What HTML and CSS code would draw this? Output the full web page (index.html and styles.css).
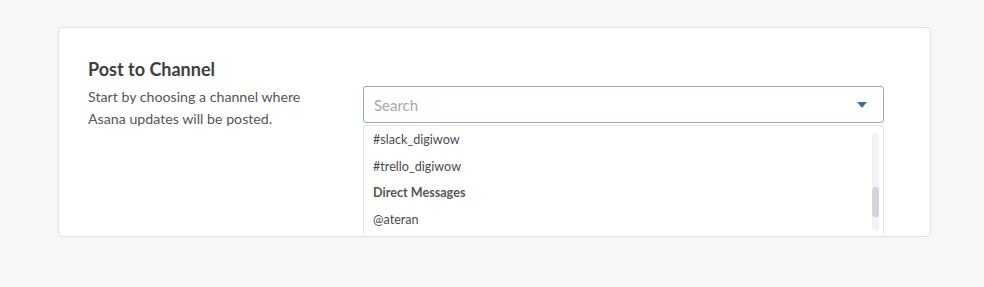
FILE: index.html
```html
<!DOCTYPE html>
<html lang="en">
<head>
    <meta charset="UTF-8">
    <meta name="viewport" content="width=device-width, initial-scale=1.0">
    <title>Post to Channel</title>
    <link rel="stylesheet" href="styles.css">
</head>
<body>
    <div class="card">
        <div class="intro">
            <h2>Post to Channel</h2>
            <p>Start by choosing a channel where Asana updates will be posted.</p>
        </div>
        <div class="picker">
            <div class="select">
                <span class="placeholder">Search</span>
                <svg class="caret" width="10" height="6" viewBox="0 0 10 6">
                    <path d="M0 0 L10 0 L5 6 Z" fill="#3b6ea5"/>
                </svg>
            </div>
            <div class="menu">
                <ul class="options">
                    <li>#slack_digiwow</li>
                    <li>#trello_digiwow</li>
                    <li class="group">Direct Messages</li>
                    <li>@ateran</li>
                </ul>
                <div class="scrollbar">
                    <div class="thumb"></div>
                </div>
            </div>
        </div>
    </div>
</body>
</html>
```

FILE: styles.css
```css
* {
    margin: 0;
    padding: 0;
    box-sizing: border-box;
    font-family: Lato, 'Open Sans', sans-serif;
}

body {
    background-color: #f7f7f7;
    padding: 27px 53px 0 58px;
}

.card {
    display: flex;
    height: 210px;
    background-color: #ffffff;
    border: 1px solid #e1e1e1;
    border-radius: 4px;
    padding: 30px 46px 0 29px;
}

.intro {
    width: 275px;
    flex-shrink: 0;
}

.intro h2 {
    font-size: 18px;
    font-weight: 700;
    color: #3f3f3f;
    line-height: 22px;
    margin-bottom: 6px;
}

.intro p {
    font-size: 14.2px;
    color: #555555;
    line-height: 22px;
    width: 240px;
}

.picker {
    flex: 1;
    padding-top: 28px;
}

.select {
    display: flex;
    align-items: center;
    justify-content: space-between;
    height: 37px;
    border: 1px solid #8eaac6;
    border-radius: 3px;
    padding: 0 16px 0 10px;
    background-color: #ffffff;
}

.placeholder {
    font-size: 15px;
    color: #a8a8a8;
}

.menu {
    display: flex;
    margin-top: 2px;
    height: 110px;
    border: 1px solid #e4e4e4;
    border-bottom: none;
    border-radius: 3px 3px 0 0;
    background-color: #ffffff;
}

.options {
    flex: 1;
    list-style: none;
    padding: 0 0 0 9px;
}

.options li {
    font-size: 12.6px;
    color: #4a4a4a;
    line-height: 27px;
    height: 26.5px;
}

.options li.group {
    font-size: 12.6px;
    font-weight: 700;
    color: #555555;
}

.scrollbar {
    display: flex;
    flex-direction: column;
    justify-content: flex-end;
    width: 7px;
    margin: 7px 4px 4px 0;
    background-color: #f2f2f4;
    border-radius: 4px;
}

.thumb {
    height: 30px;
    margin-bottom: 14px;
    background-color: #d4d4da;
    border-radius: 4px;
}
```
